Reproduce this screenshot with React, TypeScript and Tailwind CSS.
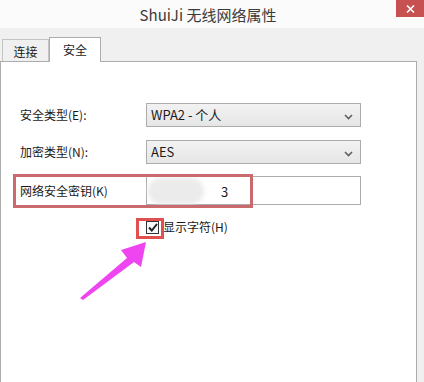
import React from "react";

const Chevron = () => (
  <svg width="9" height="6" viewBox="0 0 9 6" className="absolute right-[7px] top-[10px]">
    <path d="M1 1 L4.5 4.5 L8 1" fill="none" stroke="#606060" strokeWidth="1.6" />
  </svg>
);

export default function App() {
  return (
    <div
      className="relative w-[424px] h-[382px] overflow-hidden bg-[#f0f0f0] text-[#1a1a1a]"
      style={{ fontFamily: '"Noto Sans CJK SC", "Noto Sans", sans-serif' }}
    >
      {/* title bar */}
      <div className="relative h-[28px] bg-[#fbfbfb] flex items-center justify-center pr-[8px]">
        <span className="text-[15px] text-[#3a3a3a] leading-none">ShuiJi 无线网络属性</span>
        <div className="absolute right-0 top-0 w-[28px] h-[17px] bg-[#c75050] flex items-center justify-center">
          <svg width="9" height="8" viewBox="0 0 9 8">
            <path d="M1 0.5 L8 7.5 M8 0.5 L1 7.5" stroke="#ffffff" strokeWidth="1.6" />
          </svg>
        </div>
      </div>

      {/* tabs */}
      <div className="flex items-end h-[33px] pl-[2px] pt-[9px]">
        <div className="w-[47px] h-[22px] border border-b-0 border-[#c3c3c3] bg-[#f0f0f0] flex items-center justify-center text-[12px] leading-none pt-[2px]">
          连接
        </div>
        <div className="relative z-10 -mb-px w-[52px] h-[25px] border border-b-0 border-[#adadad] bg-white flex items-center justify-center text-[12px] leading-none">
          安全
        </div>
      </div>

      {/* panel */}
      <div className="mr-[7px] h-[330px] border border-[#adadad] bg-white pl-[19px] pt-[41px] text-[12px]">
        <div className="flex items-center h-[24px]">
          <div className="w-[126px]">安全类型(E):</div>
          <div className="relative w-[215px] h-[24px] border border-[#acacac] bg-gradient-to-b from-[#f2f2f2] to-[#e6e6e6] flex items-center pl-[4px] text-[13px]">
            WPA2 - 个人
            <Chevron />
          </div>
        </div>
        <div className="flex items-center h-[24px] mt-[13px]">
          <div className="w-[126px]">加密类型(N):</div>
          <div className="relative w-[215px] h-[24px] border border-[#acacac] bg-gradient-to-b from-[#f2f2f2] to-[#e6e6e6] flex items-center pl-[4px] text-[13px]">
            AES
            <Chevron />
          </div>
        </div>
        <div className="flex items-center h-[29px] mt-[12px]">
          <div className="w-[126px]">网络安全密钥(K)</div>
          <div className="relative w-[215px] h-[29px] border border-[#acacac] bg-white flex items-center text-[13px]">
            <div className="absolute left-[1px] top-[1px] w-[56px] h-[26px] rounded-full bg-[#ebebeb] blur-[2px]" />
            <span className="absolute left-[74px] top-[5px]">3</span>
          </div>
        </div>
        <div className="flex items-center mt-[15px] pl-[126px] h-[14px]">
          <div className="w-[13px] h-[13px] border border-[#333333] bg-[#f4f8fb] flex items-center justify-center">
            <svg width="10" height="9" viewBox="0 0 10 9">
              <path d="M1 4.5 L3.8 7.5 L9 1" fill="none" stroke="#222222" strokeWidth="2" />
            </svg>
          </div>
          <span className="ml-[4px] leading-none">显示字符(H)</span>
        </div>
      </div>

      {/* annotations */}
      <div className="absolute left-[13px] top-[174px] w-[240px] h-[34px] border-[3px] border-[#c86a6e]" />
      <div className="absolute left-[136px] top-[218px] w-[28px] h-[21px] border-[3px] border-[#e05050]" />
      <svg className="absolute left-0 top-0" width="424" height="382" viewBox="0 0 424 382">
        <path
          d="M80 298 L127 258 L121 250 L146 242 L141 267 L134 262 L83 300 Z"
          fill="#ee45f0"
        />
      </svg>
    </div>
  );
}
